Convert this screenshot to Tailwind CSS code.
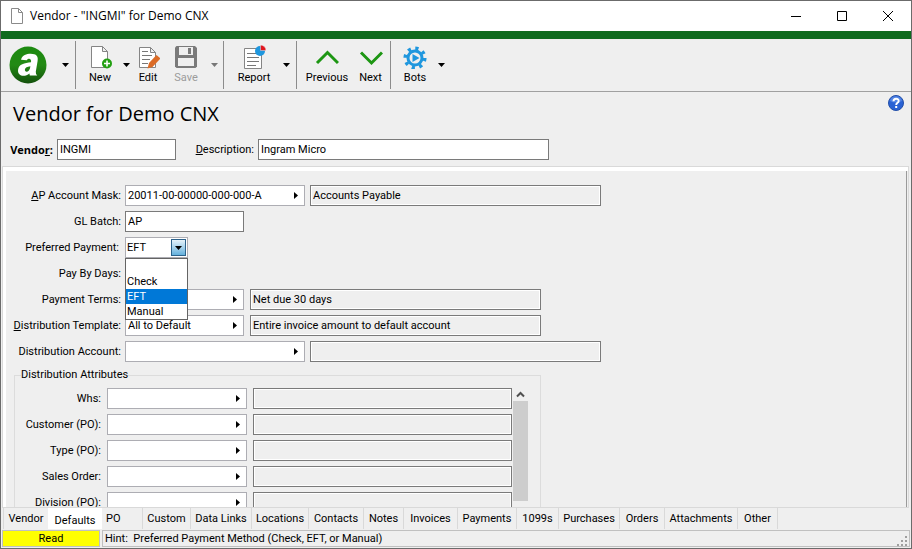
<!DOCTYPE html>
<html lang="en">
<head>
  <meta charset="UTF-8">
  <meta name="viewport" content="width=device-width, initial-scale=1.0">
  <title>Vendor - "INGMI" for Demo CNX</title>
  <script src="https://cdn.jsdelivr.net/npm/@tailwindcss/browser@4"></script>
</head>
<body class="bg-[#efefef] font-['Roboto',sans-serif] text-[11px] leading-4 text-black">
  <div class="flex h-screen flex-col overflow-hidden border border-[#6b6b6b]">

    <!-- Title bar -->
    <header class="flex h-[30px] shrink-0 items-center bg-white pl-2.5">
      <svg class="mr-[7px] h-4 w-3" viewBox="0 0 12 16" fill="#fff" stroke="#8a8a8a"><path d="M.5.5h7l4 4v11H.5zM7.500.5v4h4"/></svg>
      <span class="flex-1 font-['Open_Sans',sans-serif] text-xs">Vendor - "INGMI" for Demo CNX</span>
      <button aria-label="Minimize" class="flex h-full w-[46px] items-center justify-center"><svg class="size-2.5" viewBox="0 0 10 10" stroke="#000"><path d="M0 5.500h10"/></svg></button>
      <button aria-label="Maximize" class="flex h-full w-[46px] items-center justify-center"><svg class="size-2.5" viewBox="0 0 10 10" fill="none" stroke="#000"><path d="M.5.5h9v9h-9z"/></svg></button>
      <button aria-label="Close" class="flex h-full w-[46px] items-center justify-center"><svg class="size-2.5" viewBox="0 0 10 10" stroke="#000"><path d="M0 0l10 10M10 0L0 10"/></svg></button>
    </header>
    <div class="h-2 shrink-0 bg-[#0f6b1e]"></div>

    <!-- Toolbar -->
    <nav class="flex h-[53px] shrink-0 items-stretch border-b border-[#a0a0a0] py-0.5">
      <button aria-label="Menu" class="flex w-[74px] items-center gap-[15px] pl-2">
        <svg class="size-[38px]" viewBox="0 0 38 38">
          <defs><linearGradient id="logo" x2="0" y2="1"><stop stop-color="#1c8a10"/><stop offset=".5" stop-color="#238a14"/><stop offset="1" stop-color="#14500c"/></linearGradient></defs>
          <circle cx="19" cy="19" r="18.500" fill="url(#logo)"/>
          <path transform="translate(19 19) scale(1.200) translate(-18.300 -18.800)" d="M12.500 14.500C13.500 10.500 17 9.500 20.500 9.500C25.500 9.500 27 11.800 26.300 15.500L24.800 24.500Q24.600 26.500 26 27.500H19.800L19.500 25.800C15.500 29.500 9.500 28 10 23C10.500 18 15.500 17.300 20.800 16.600C21.600 13 18.200 12.800 17.300 14.800ZM20.300 19.800C17.500 20.200 16 20.700 15.700 22.600C15.500 25.600 19.900 24.900 20.300 19.800Z" fill="#fff" fill-rule="evenodd"/>
        </svg>
        <svg class="h-1 w-[7px]" viewBox="0 0 7 4"><path d="M0 0h7L3.500 4z"/></svg>
      </button>
      <div class="w-px bg-[#8c8c8c]"></div>
      <button class="ml-1 flex w-10 flex-col items-center gap-px pt-1">
        <svg class="size-6" viewBox="0 0 24 24"><path d="M3.500 1.500h11l5 5v16h-16zM14.500 1.500v5h5" fill="#fff" stroke="#858585"/><circle cx="19" cy="18.500" r="5" fill="#23a012"/><path d="M19 15.500v6M16 18.500h6" stroke="#fff" stroke-width="1.600"/></svg>
        New
      </button>
      <button aria-label="New options" class="flex w-3 items-center justify-center"><svg class="h-1 w-[7px]" viewBox="0 0 7 4"><path d="M0 0h7L3.500 4z"/></svg></button>
      <button class="flex w-8 flex-col items-center gap-px pt-1">
        <svg class="size-6" viewBox="0 0 24 24"><path d="M3.500 2.500h11l5 5v15h-16zM14.500 2.500v5h5" fill="#fff" stroke="#858585"/><path d="M6 6.500h6M6 10.500h10M6 14.500h8M6 18.500h6" stroke="#777"/><path d="M11.500 23.500l1.500-5.500L20.500 10l4 3.500L16.500 22z" fill="#db6b26"/></svg>
        Edit
      </button>
      <button disabled class="ml-0.5 flex w-10 flex-col items-center gap-px pt-1 text-[#9b9b9b]">
        <svg class="size-6" viewBox="0 0 24 24"><path d="M1 2.500L2.500 1H21l2 2v18.500L21.500 23h-19L1 21.500z" fill="#7a7a7a"/><path d="M5 2h14v8H5zM4 13h16v8H4z" fill="#efefef"/><path d="M14 3h3v6h-3z" fill="#7a7a7a"/></svg>
        Save
      </button>
      <button disabled aria-label="Save options" class="flex w-4 items-center justify-center"><svg class="h-1 w-[7px]" viewBox="0 0 7 4"><path d="M0 0h7L3.500 4z" fill="#777"/></svg></button>
      <div class="ml-px w-px bg-[#8c8c8c]"></div>
      <button class="ml-2 flex w-11 flex-col items-center gap-px pt-1">
        <svg class="size-6" viewBox="0 0 24 24"><path d="M2.500 3.500h17v20h-17z" fill="#fff" stroke="#858585"/><path d="M5 8.500h9M5 12.500h12M5 16.500h12M5 20.500h9" stroke="#777"/><circle cx="18" cy="6" r="5" fill="#1f97de"/><path d="M18.500 0a5.500 5.500 0 0 1 5.500 5.500h-5.500z" fill="#e0161e" stroke="#efefef" stroke-width=".5"/></svg>
        Report
      </button>
      <button aria-label="Report options" class="flex w-5 items-center justify-center"><svg class="h-1 w-[7px]" viewBox="0 0 7 4"><path d="M0 0h7L3.500 4z"/></svg></button>
      <div class="w-px bg-[#8c8c8c]"></div>
      <button class="ml-1.5 flex w-12 flex-col items-center gap-px pt-1">
        <svg class="size-6" viewBox="0 0 24 24" fill="none" stroke="#1d9613" stroke-width="3"><path d="M2 18L12.500 7.500 23 18"/></svg>
        Previous
      </button>
      <button class="flex w-[39px] flex-col items-center gap-px pt-1">
        <svg class="size-6" viewBox="0 0 24 24" fill="none" stroke="#1d9613" stroke-width="3"><path d="M2 7.500L12.500 18 23 7.500"/></svg>
        Next
      </button>
      <div class="w-px bg-[#8c8c8c]"></div>
      <button class="ml-1 flex w-10 flex-col items-center gap-px pt-1">
        <svg class="size-6" viewBox="0 0 24 24" stroke="#1f97de" fill="none"><circle cx="12" cy="13" r="9.800" stroke-width="3.500" stroke-dasharray="3.200 4.497"/><circle cx="12" cy="13" r="7" stroke-width="3"/><path d="M9.500 9l7 4-7 4z" fill="#1f97de" stroke="none"/></svg>
        Bots
      </button>
      <button aria-label="Bots options" class="flex w-3 items-center justify-center"><svg class="h-1 w-[7px]" viewBox="0 0 7 4"><path d="M0 0h7L3.500 4z"/></svg></button>
    </nav>

    <!-- Record header -->
    <section class="shrink-0 pb-1.5">
      <div class="flex h-[47px] items-start justify-between pr-[7px] pl-3">
        <h1 class="pt-1.5 font-['Open_Sans',sans-serif] text-xl leading-8">Vendor for Demo CNX</h1>
        <button aria-label="Help" class="pt-[3px]">
          <svg class="size-4" viewBox="0 0 16 16"><circle cx="8" cy="8" r="7.500" fill="#2a62d4" stroke="#2450a8"/><path d="M2 6a6.200 6.200 0 0 1 12 0q-6 3-12 0z" fill="#6f9cf0" opacity=".6"/><path d="M5.500 6.200c0-3.400 5.200-3.200 5.200-.3 0 2-2.500 1.800-2.500 4" fill="none" stroke="#fff" stroke-width="1.900"/><path d="M7.200 11h2v2h-2z" fill="#fff"/></svg>
        </button>
      </div>
      <div class="flex h-[21px] items-center">
        <label for="vendor" class="w-[56px] pr-1 text-right font-['Open_Sans',sans-serif] font-bold">Vendo<u>r</u>:</label>
        <input id="vendor" value="INGMI" class="h-[21px] w-[119px] border border-[#7a7a7a] bg-white px-0.5">
        <label for="description" class="w-[82px] pr-1 text-right"><u>D</u>escription:</label>
        <input id="description" value="Ingram Micro" class="h-[21px] w-[291px] border border-[#7a7a7a] bg-white px-0.5">
      </div>
    </section>

    <!-- Defaults tab page -->
    <main class="mr-0.5 ml-px flex min-h-0 flex-1 border border-[#d9d9d9] bg-white pt-1 pl-[3px]">
      <div class="flex min-w-0 flex-1 flex-col overflow-hidden border-r border-[#9a9a9a] bg-[#efefef] pt-3.5">
        <div class="flex shrink-0 flex-col gap-[5px]">
          <div class="flex h-[21px] items-center">
            <label for="mask" class="w-[119px] pr-1 text-right"><u>A</u>P Account Mask:</label>
            <div class="flex h-[21px] w-[180px] items-center border border-[#adadb3] bg-white">
              <input id="mask" value="20011-00-00000-000-000-A" class="min-w-0 flex-1 px-0.5">
              <button aria-label="Look up account mask" class="px-1.5"><svg class="h-[7px] w-1" viewBox="0 0 4 7"><path d="M0 0l4 3.500L0 7z"/></svg></button>
            </div>
            <input aria-label="Account description" readonly value="Accounts Payable" class="ml-[5px] h-[21px] w-[291px] border border-[#7a7a7a] px-0.5 inset-shadow-[0_0_0_1px_#fff]">
          </div>
          <div class="flex h-[21px] items-center">
            <label for="batch" class="w-[119px] pr-1 text-right">GL Batch:</label>
            <input id="batch" value="AP" class="h-[21px] w-[119px] border border-[#7a7a7a] bg-white px-0.5">
          </div>
          <div class="flex h-[21px] items-center">
            <label for="payment" class="w-[119px] pr-1.5 text-right">Preferred Payment:</label>
            <div class="relative h-[21px] w-[63px]">
              <select id="payment" class="h-[21px] w-full appearance-none border border-[#adadb3] bg-white px-px">
                <option></option>
                <option>Check</option>
                <option selected>EFT</option>
                <option>Manual</option>
              </select>
              <span class="pointer-events-none absolute top-0.5 right-0.5 flex h-[17px] w-[15px] items-center justify-center border border-[#2c628b] bg-linear-to-b from-[#e6f3fa] to-[#62b0dc]">
                <svg class="h-1 w-[7px]" viewBox="0 0 7 4"><path d="M0 0h7L3.500 4z"/></svg>
              </span>
              <!-- Open list -->
              <ul role="listbox" class="absolute top-[21px] left-0 z-10 w-full border border-[#646464] bg-white leading-[15px]">
                <li role="option" class="h-[15px] px-px"></li>
                <li role="option" class="h-[15px] px-px">Check</li>
                <li role="option" aria-selected="true" class="h-[15px] bg-[#0078d7] px-px text-white">EFT</li>
                <li role="option" class="h-[15px] px-px">Manual</li>
              </ul>
            </div>
          </div>
          <div class="flex h-[21px] items-center">
            <label for="days" class="w-[119px] pr-1 text-right">Pay By Days:</label>
            <input id="days" class="h-[21px] w-[60px] border border-[#7a7a7a] bg-white px-0.5">
          </div>
          <div class="flex h-[21px] items-center">
            <label for="terms" class="w-[119px] pr-1 text-right">Payment Terms:</label>
            <div class="flex h-[21px] w-[119px] items-center border border-[#adadb3] bg-white">
              <input id="terms" class="min-w-0 flex-1 px-0.5">
              <button aria-label="Look up terms" class="px-1.5"><svg class="h-[7px] w-1" viewBox="0 0 4 7"><path d="M0 0l4 3.500L0 7z"/></svg></button>
            </div>
            <input aria-label="Terms description" readonly value="Net due 30 days" class="ml-1.5 h-[21px] w-[291px] border border-[#7a7a7a] px-0.5 inset-shadow-[0_0_0_1px_#fff]">
          </div>
          <div class="flex h-[21px] items-center">
            <label for="template" class="w-[119px] pr-1 text-right whitespace-nowrap"><u>D</u>istribution Template:</label>
            <div class="flex h-[21px] w-[119px] items-center border border-[#adadb3] bg-white">
              <input id="template" value="All to Default" class="min-w-0 flex-1 px-0.5">
              <button aria-label="Look up template" class="px-1.5"><svg class="h-[7px] w-1" viewBox="0 0 4 7"><path d="M0 0l4 3.500L0 7z"/></svg></button>
            </div>
            <input aria-label="Template description" readonly value="Entire invoice amount to default account" class="ml-1.5 h-[21px] w-[291px] border border-[#7a7a7a] px-0.5 inset-shadow-[0_0_0_1px_#fff]">
          </div>
          <div class="flex h-[21px] items-center">
            <label for="account" class="w-[119px] pr-1 text-right">Distribution Account:</label>
            <div class="flex h-[21px] w-[180px] items-center border border-[#adadb3] bg-white">
              <input id="account" class="min-w-0 flex-1 px-0.5">
              <button aria-label="Look up account" class="px-1.5"><svg class="h-[7px] w-1" viewBox="0 0 4 7"><path d="M0 0l4 3.500L0 7z"/></svg></button>
            </div>
            <input aria-label="Distribution account description" readonly class="ml-[5px] h-[21px] w-[291px] border border-[#7a7a7a] px-0.5 inset-shadow-[0_0_0_1px_#fff]">
          </div>
        </div>

        <fieldset class="mt-1.5 ml-2 flex w-[527px] shrink-0 border border-[#dcdcdc]">
          <legend class="ml-1.5 leading-3.5">Distribution Attributes</legend>
          <div class="flex pt-1.5">
            <div class="flex flex-col gap-[5px]">
              <div class="flex h-[21px] items-center">
                <label for="whs" class="w-[92px] pr-1.5 text-right">Whs:</label>
                <div class="flex h-[21px] w-[140px] items-center border border-[#adadb3] bg-white">
                  <input id="whs" class="min-w-0 flex-1 px-0.5">
                  <button aria-label="Look up warehouse" class="px-1.5"><svg class="h-[7px] w-1" viewBox="0 0 4 7"><path d="M0 0l4 3.500L0 7z"/></svg></button>
                </div>
                <input aria-label="Warehouse description" readonly class="ml-1.5 h-[21px] w-[259px] border border-[#7a7a7a] px-0.5 inset-shadow-[0_0_0_1px_#fff]">
              </div>
              <div class="flex h-[21px] items-center">
                <label for="customer" class="w-[92px] pr-1.5 text-right">Customer (PO):</label>
                <div class="flex h-[21px] w-[140px] items-center border border-[#adadb3] bg-white">
                  <input id="customer" class="min-w-0 flex-1 px-0.5">
                  <button aria-label="Look up customer" class="px-1.5"><svg class="h-[7px] w-1" viewBox="0 0 4 7"><path d="M0 0l4 3.500L0 7z"/></svg></button>
                </div>
                <input aria-label="Customer description" readonly class="ml-1.5 h-[21px] w-[259px] border border-[#7a7a7a] px-0.5 inset-shadow-[0_0_0_1px_#fff]">
              </div>
              <div class="flex h-[21px] items-center">
                <label for="type" class="w-[92px] pr-1.5 text-right">Type (PO):</label>
                <div class="flex h-[21px] w-[140px] items-center border border-[#adadb3] bg-white">
                  <input id="type" class="min-w-0 flex-1 px-0.5">
                  <button aria-label="Look up type" class="px-1.5"><svg class="h-[7px] w-1" viewBox="0 0 4 7"><path d="M0 0l4 3.500L0 7z"/></svg></button>
                </div>
                <input aria-label="Type description" readonly class="ml-1.5 h-[21px] w-[259px] border border-[#7a7a7a] px-0.5 inset-shadow-[0_0_0_1px_#fff]">
              </div>
              <div class="flex h-[21px] items-center">
                <label for="order" class="w-[92px] pr-1.5 text-right">Sales Order:</label>
                <div class="flex h-[21px] w-[140px] items-center border border-[#adadb3] bg-white">
                  <input id="order" class="min-w-0 flex-1 px-0.5">
                  <button aria-label="Look up sales order" class="px-1.5"><svg class="h-[7px] w-1" viewBox="0 0 4 7"><path d="M0 0l4 3.500L0 7z"/></svg></button>
                </div>
                <input aria-label="Sales order description" readonly class="ml-1.5 h-[21px] w-[259px] border border-[#7a7a7a] px-0.5 inset-shadow-[0_0_0_1px_#fff]">
              </div>
              <div class="flex h-[21px] items-center">
                <label for="division" class="w-[92px] pr-1.5 text-right">Division (PO):</label>
                <div class="flex h-[21px] w-[140px] items-center border border-[#adadb3] bg-white">
                  <input id="division" class="min-w-0 flex-1 px-0.5">
                  <button aria-label="Look up division" class="px-1.5"><svg class="h-[7px] w-1" viewBox="0 0 4 7"><path d="M0 0l4 3.500L0 7z"/></svg></button>
                </div>
                <input aria-label="Division description" readonly class="ml-1.5 h-[21px] w-[259px] border border-[#7a7a7a] px-0.5 inset-shadow-[0_0_0_1px_#fff]">
              </div>
            </div>
            <!-- Scroll bar -->
            <div class="ml-px w-[15px]">
              <button aria-label="Scroll up" class="flex h-[13px] w-full items-center justify-center"><svg class="h-[7px] w-[9px]" viewBox="0 0 9 7" fill="none" stroke="#505050" stroke-width="2"><path d="M1 5.500l3.500-3.500L8 5.500"/></svg></button>
              <div class="h-[100px] bg-[#cdcdcd]"></div>
            </div>
          </div>
        </fieldset>
      </div>
      <div class="w-px bg-[#efefef]"></div>
    </main>

    <!-- Tabs -->
    <div role="tablist" class="flex h-[21px] shrink-0 items-start pl-0.5 leading-[21px]">
      <button role="tab" class="w-[45px] border-l border-[#d9d9d9]">Vendor</button>
      <button role="tab" aria-selected="true" class="h-[21px] w-[54px] bg-white pt-0.5">Defaults</button>
      <button role="tab" class="w-[41px] border-r border-[#d9d9d9] pl-1 text-left">PO</button>
      <button role="tab" class="w-12 border-r border-[#d9d9d9]">Custom</button>
      <button role="tab" class="w-[61px] border-r border-[#d9d9d9]">Data Links</button>
      <button role="tab" class="w-[57px] border-r border-[#d9d9d9]">Locations</button>
      <button role="tab" class="w-[55px] border-r border-[#d9d9d9]">Contacts</button>
      <button role="tab" class="w-10 border-r border-[#d9d9d9]">Notes</button>
      <button role="tab" class="w-[54px] border-r border-[#d9d9d9]">Invoices</button>
      <button role="tab" class="w-[59px] border-r border-[#d9d9d9]">Payments</button>
      <button role="tab" class="w-[42px] border-r border-[#d9d9d9]">1099s</button>
      <button role="tab" class="w-[61px] border-r border-[#d9d9d9]">Purchases</button>
      <button role="tab" class="w-[45px] border-r border-[#d9d9d9]">Orders</button>
      <button role="tab" class="w-[73px] border-r border-[#d9d9d9]">Attachments</button>
      <button role="tab" class="w-10 border-r border-[#d9d9d9]">Other</button>
    </div>

    <!-- Status bar -->
    <footer class="flex h-[19px] shrink-0 gap-0.5 p-px">
      <div class="w-[98px] border border-[#c0c0c0] bg-[#ffff00] text-center leading-4">Read</div>
      <div class="flex flex-1 items-center justify-between border border-[#c0c0c0] pl-0.5">
        <span class="whitespace-pre">Hint:  Preferred Payment Method (Check, EFT, or Manual)</span>
        <svg class="mt-1 mr-0.5 h-[10px] w-[10px]" viewBox="0 0 10 10" fill="#9f9f9f"><path d="M8 0h2v2H8zM8 4h2v2H8zM4 4h2v2H4zM8 8h2v2H8zM4 8h2v2H4zM0 8h2v2H0z"/></svg>
      </div>
    </footer>
  </div>
</body>
</html>
